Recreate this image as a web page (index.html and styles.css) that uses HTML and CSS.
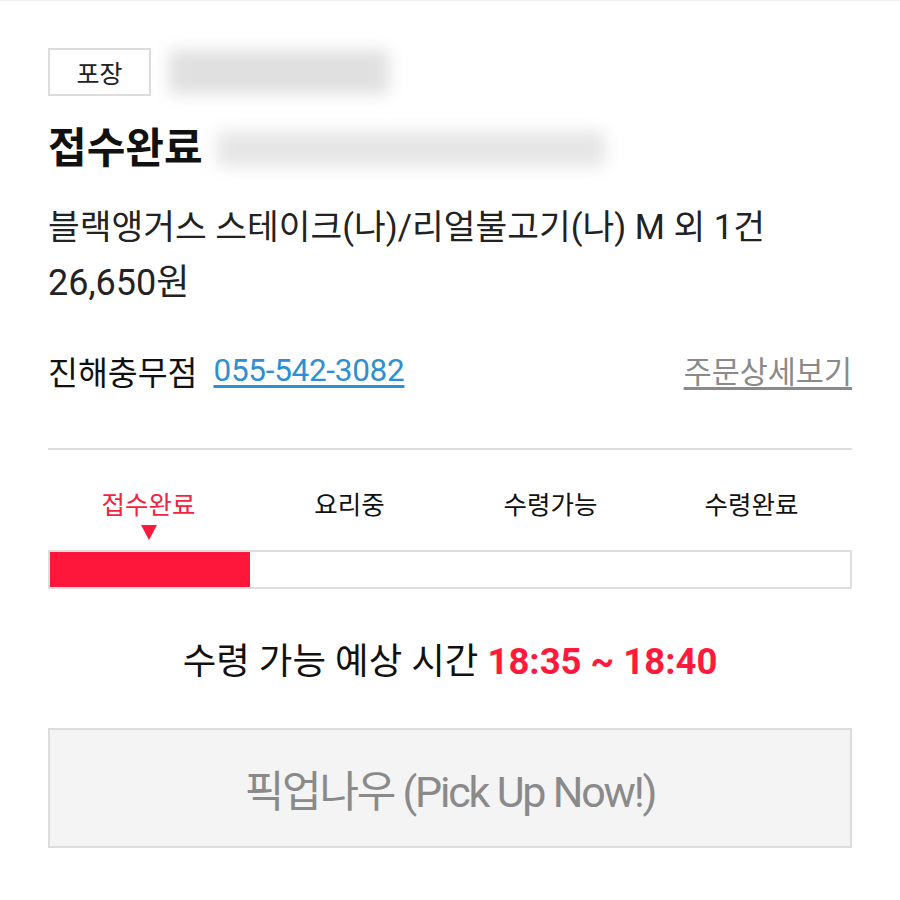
FILE: index.html
```html
<!DOCTYPE html>
<html lang="ko">
<head>
<meta charset="utf-8">
<link rel="stylesheet" href="styles.css">
</head>
<body>
<div class="topline"></div>
<main class="order">
  <div class="row-tag">
    <span class="tag">포장</span>
    <span class="blur blur-a"></span>
  </div>
  <div class="row-title">
    <h1 class="title">접수완료</h1>
    <span class="blur blur-b"></span>
  </div>
  <p class="menu">블랙앵거스 스테이크(나)/리얼불고기(나) M 외 1건</p>
  <p class="price">26,650원</p>
  <div class="store-row">
    <div class="store">
      <span class="store-name">진해충무점</span>
      <a class="phone" href="#">055-542-3082</a>
    </div>
    <a class="detail" href="#">주문상세보기</a>
  </div>
  <hr class="divider">
  <div class="steps">
    <div class="step active">접수완료<span class="arrow"></span></div>
    <div class="step">요리중</div>
    <div class="step">수령가능</div>
    <div class="step">수령완료</div>
  </div>
  <div class="bar"><div class="fill" style="width:25%"></div></div>
  <p class="eta">수령 가능 예상 시간 <strong>18:35 ~ 18:40</strong></p>
  <button class="pickup">픽업나우 (Pick Up Now!)</button>
</main>
</body>
</html>
```

FILE: styles.css
```css
html, body {
  margin: 0;
  padding: 0;
  background: #fff;
}
body {
  font-family: Roboto, "Noto Sans CJK KR", sans-serif;
  color: #111;
}
.topline {
  height: 1px;
  background: #eeeeee;
}
.order {
  padding: 0 48px 0 48px;
}
.row-tag {
  display: flex;
  align-items: center;
  gap: 18px;
  margin-top: 41px;
  height: 60px;
}
.tag {
  box-sizing: border-box;
  width: 103px;
  height: 48px;
  border: 2px solid #dcdcdc;
  display: flex;
  align-items: center;
  justify-content: center;
  font-size: 25px;
  color: #222;
}
.blur {
  display: block;
  background: #e0e0e0;
  filter: blur(8px);
}
.blur-a {
  width: 220px;
  height: 44px;
}
.row-title {
  display: flex;
  align-items: center;
  gap: 14px;
  margin-top: 20px;
  height: 54px;
}
.title {
  margin: 0;
  font-size: 42px;
  font-weight: 700;
  color: #111;
  line-height: 1;
}
.blur-b {
  width: 388px;
  height: 36px;
  background: #e6e6e6;
}
.menu {
  margin: 31px 0 0;
  font-size: 34.5px;
  line-height: 40px;
  color: #222;
}
.price {
  margin: 16px 0 0;
  font-size: 36px;
  line-height: 40px;
  color: #222;
}
.store-row {
  display: flex;
  justify-content: space-between;
  align-items: center;
  margin-top: 46px;
  height: 42px;
  font-size: 32.5px;
}
.store {
  display: flex;
  align-items: center;
  gap: 16px;
}
.store-name {
  color: #111;
}
.phone {
  color: #2f8fd0;
  text-decoration: underline;
  text-underline-offset: 4px;
  font-size: 31.5px;
  letter-spacing: -0.3px;
}
.detail {
  color: #8a8a8a;
  font-size: 30.5px;
  text-decoration: underline;
  text-underline-offset: 4px;
}
.divider {
  margin: 57px 0 0;
  border: 0;
  height: 2px;
  background: #dddddd;
}
.steps {
  display: grid;
  grid-template-columns: repeat(4, 1fr);
  margin-top: 40px;
  height: 60px;
}
.step {
  position: relative;
  text-align: center;
  font-size: 25.5px;
  line-height: 30px;
  color: #111;
}
.step.active {
  color: #f0243f;
}
.arrow {
  position: absolute;
  left: 50%;
  top: 35px;
  transform: translateX(-50%);
  width: 0;
  height: 0;
  border-left: 8px solid transparent;
  border-right: 8px solid transparent;
  border-top: 15px solid #ff1a3d;
}
.bar {
  box-sizing: border-box;
  height: 39px;
  border: 2px solid #dedede;
  background: #fff;
}
.fill {
  height: 100%;
  background: #ff163b;
}
.eta {
  margin: 53px 0 0;
  text-align: center;
  font-size: 36.5px;
  line-height: 40px;
  color: #111;
}
.eta strong {
  color: #ff1a3c;
  font-weight: 700;
}
.pickup {
  display: block;
  box-sizing: border-box;
  width: 100%;
  height: 120px;
  margin-top: 46px;
  border: 2px solid #dddddd;
  background: #f4f4f4;
  color: #8a8a8a;
  font-family: Roboto, "Noto Sans CJK KR", sans-serif;
  font-size: 43px;
  letter-spacing: -2.2px;
}
```
